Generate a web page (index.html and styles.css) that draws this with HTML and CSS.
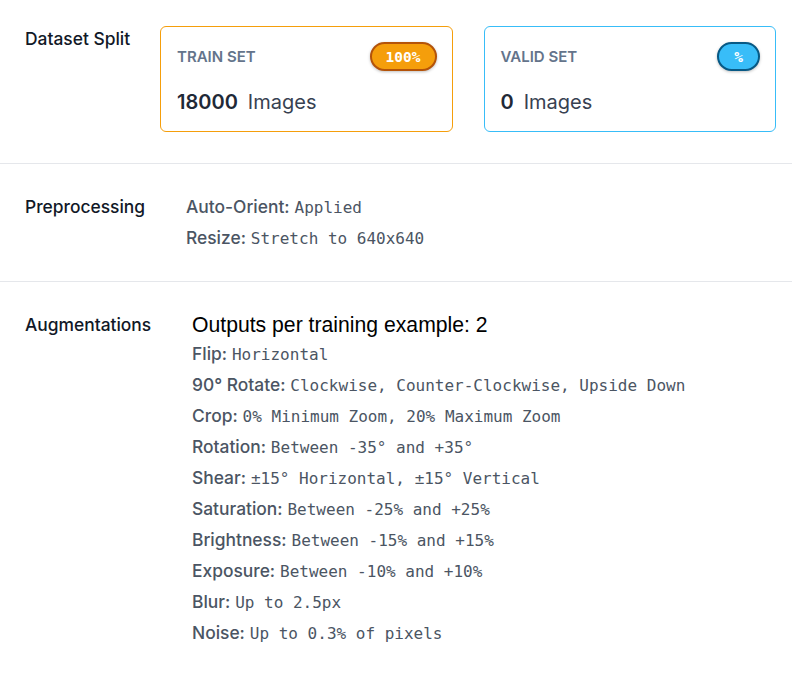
FILE: index.html
```html
<!DOCTYPE html>
<html>
<head>
<meta charset="utf-8">
<link rel="stylesheet" href="styles.css">
</head>
<body>
<div class="page">
  <section class="section section--split">
    <div class="label label--split">Dataset Split</div>
    <div class="cards">
      <div class="card card--train">
        <div class="card-head">
          <span class="card-title">TRAIN SET</span>
          <span class="badge badge--train">100%</span>
        </div>
        <div class="card-count"><span class="num">18000</span><span class="unit">Images</span></div>
      </div>
      <div class="card card--valid">
        <div class="card-head">
          <span class="card-title">VALID SET</span>
          <span class="badge badge--valid">%</span>
        </div>
        <div class="card-count"><span class="num">0</span><span class="unit">Images</span></div>
      </div>
    </div>
  </section>

  <section class="section">
    <div class="label label--pre">Preprocessing</div>
    <div class="rows">
      <div class="row"><span class="key">Auto-Orient:</span> <span class="val">Applied</span></div>
      <div class="row"><span class="key">Resize:</span> <span class="val">Stretch to 640x640</span></div>
    </div>
  </section>

  <section class="section">
    <div class="label label--aug">Augmentations</div>
    <div class="rows">
      <div class="heading">Outputs per training example: 2</div>
      <div class="row"><span class="key">Flip:</span> <span class="val">Horizontal</span></div>
      <div class="row"><span class="key">90° Rotate:</span> <span class="val">Clockwise, Counter-Clockwise, Upside Down</span></div>
      <div class="row"><span class="key">Crop:</span> <span class="val">0% Minimum Zoom, 20% Maximum Zoom</span></div>
      <div class="row"><span class="key">Rotation:</span> <span class="val">Between -35° and +35°</span></div>
      <div class="row"><span class="key">Shear:</span> <span class="val">±15° Horizontal, ±15° Vertical</span></div>
      <div class="row"><span class="key">Saturation:</span> <span class="val">Between -25% and +25%</span></div>
      <div class="row"><span class="key">Brightness:</span> <span class="val">Between -15% and +15%</span></div>
      <div class="row"><span class="key">Exposure:</span> <span class="val">Between -10% and +10%</span></div>
      <div class="row"><span class="key">Blur:</span> <span class="val">Up to 2.5px</span></div>
      <div class="row"><span class="key">Noise:</span> <span class="val">Up to 0.3% of pixels</span></div>
    </div>
  </section>
</div>
</body>
</html>
```

FILE: styles.css
```css
* { box-sizing: border-box; }
html, body { margin: 0; padding: 0; background: #ffffff; }
body {
  font-family: Inter, "Noto Sans", sans-serif;
  color: #111827;
}
.page { width: 792px; }

.section {
  display: flex;
  align-items: flex-start;
  padding: 31px 16px 31px 25px;
  border-bottom: 1px solid #e5e7eb;
}
.section:last-child { border-bottom: none; }
.section--split { padding-top: 26px; }

.label {
  flex: none;
  font-size: 17.4px;
  font-weight: 500;
  line-height: 24px;
  color: #111827;
}
.label--split { width: 135px; padding-top: 1px; }
.label--pre { width: 161px; }
.label--aug { width: 167px; }

.cards {
  flex: 1;
  display: grid;
  grid-template-columns: 1fr 1fr;
  gap: 31px;
}
.card {
  border: 1px solid;
  border-radius: 6px;
  padding: 15px 16px 15px 16px;
  height: 106px;
}
.card--train { border-color: #f59e0b; }
.card--valid { border-color: #38bdf8; }
.card-head {
  display: flex;
  justify-content: space-between;
  align-items: center;
  height: 29px;
}
.card-title {
  font-size: 15px;
  font-weight: 600;
  color: #64748b;
}
.badge {
  display: inline-flex;
  align-items: center;
  justify-content: center;
  height: 29px;
  padding: 0 14px;
  border-radius: 999px;
  border: 2px solid;
  color: #ffffff;
  font-family: "DejaVu Sans Mono", monospace;
  font-weight: 700;
  font-size: 14.5px;
  box-shadow: 0 1px 3px rgba(0,0,0,0.25);
}
.badge--train { background: #f59e0b; border-color: #b45309; min-width: 67px; margin-right: -1px; }
.badge--valid { background: #38bdf8; border-color: #075985; min-width: 43px; padding: 0 12px; margin-right: -1px; }

.card-count {
  margin-top: 17px;
  line-height: 28px;
  font-size: 20px;
  color: #374151;
}
.card-count .num { font-weight: 600; color: #1f2937; margin-right: 10px; }
.card-count .unit { font-weight: 400; }

.rows {
  display: flex;
  flex-direction: column;
  gap: 7px;
}
.heading {
  font-family: "Liberation Sans", Arial, sans-serif;
  font-size: 21.2px;
  line-height: 24px;
  height: 24px;
  color: #000000;
  margin-bottom: -2px;
}
.row {
  font-size: 17.4px;
  line-height: 24px;
  height: 24px;
  color: #4b5563;
  white-space: nowrap;
}
.key { font-weight: 500; color: #4b5563; }
.val {
  font-family: "DejaVu Sans Mono", monospace;
  font-size: 16px;
  color: #4b5563;
}
```
